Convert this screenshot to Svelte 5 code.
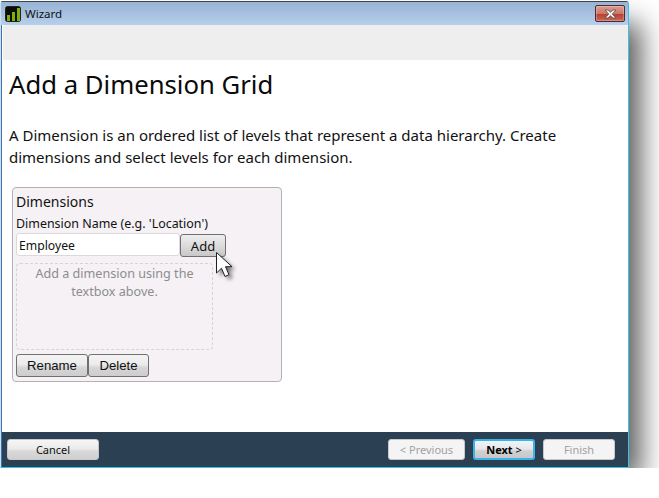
<script>
  const bars = [
    { x: 2, y: 9, h: 6 },
    { x: 7, y: 6, h: 9 },
    { x: 12, y: 2, h: 13 }
  ];
</script>

<div class="window">
  <header class="titlebar">
    <svg class="app-icon" width="16" height="16" viewBox="0 0 16 16">
      <rect x="0.5" y="0.5" width="15" height="15" rx="2" fill="#0c0c04" stroke="#222" />
      {#each bars as b}
        <rect x={b.x} y={b.y} width="3" height={b.h} fill="#7db00a" />
      {/each}
    </svg>
    <span class="title">Wizard</span>
    <div class="close">
      <svg width="13" height="10" viewBox="0 0 13 10">
        <path d="M1 1h3l2.500 2.200L9 1h3L8.300 5 12 9H9L6.500 6.800 4 9H1l3.700-4z" fill="#f2f2f4" stroke="#5a4a50" stroke-width="0.8" />
      </svg>
    </div>
  </header>

  <div class="client">
    <div class="band"></div>
    <main class="content">
      <h1>Add a Dimension Grid</h1>
      <p class="intro">A Dimension is an ordered list of levels that represent a data hierarchy. Create dimensions and select levels for each dimension.</p>

      <section class="group">
        <h2>Dimensions</h2>
        <label for="dim">Dimension Name (e.g. 'Location')</label>
        <div class="entry">
          <input id="dim" value="Employee" />
          <div class="add-wrap">
            <button class="btn add">Add</button>
            <svg class="cursor" width="28" height="36" viewBox="0 0 28 36">
              <defs>
                <filter id="cs" x="-50%" y="-50%" width="200%" height="200%"><feGaussianBlur stdDeviation="2" /></filter>
              </defs>
              <path d="M5 5v20l5-4.500 3.500 8 4-1.800-3.500-7.700H20z" fill="#000" opacity="0.55" filter="url(#cs)" />
              <path d="M1.500 1.500v20.500l5-4.800 3.500 8.300 4-1.800-3.500-8h6.500z" fill="#fff" stroke="#222" stroke-width="1" stroke-linejoin="round" />
            </svg>
          </div>
        </div>
        <div class="list">Add a dimension using the textbox above.</div>
        <div class="actions">
          <button class="btn">Rename</button>
          <button class="btn">Delete</button>
        </div>
      </section>
    </main>
    <footer class="footer">
      <button class="nav cancel">Cancel</button>
      <div class="right">
        <button class="nav off">&lt; Previous</button>
        <button class="nav next"><b>Next</b> &gt;</button>
        <button class="nav off">Finish</button>
      </div>
    </footer>
  </div>
</div>

<style>
  :global(body) {
    margin: 0;
    background: #fff;
  }
  .window {
    width: 629px;
    height: 467px;
    margin-top: 1px;
    box-sizing: border-box;
    display: flex;
    flex-direction: column;
    border: 1px solid #35c4e8;
    border-top: 1px solid #3c4650;
    border-left-color: #cfdff0;
    border-radius: 3px 3px 0 0;
    background: #b4cde8;
    box-shadow: 17px 17px 26px -5px rgba(0, 0, 0, 0.64);
    font-family: "Noto Sans", "Open Sans", sans-serif;
  }
  .titlebar {
    height: 23px;
    flex: none;
    display: flex;
    align-items: center;
    padding: 0 3px 0 4px;
    gap: 4px;
    background: linear-gradient(#98b3d3, #b5cfec);
  }
  .app-icon {
    flex: none;
  }
  .title {
    font-size: 11.500px;
    color: #111;
  }
  .close {
    margin-left: auto;
    width: 30px;
    height: 17px;
    box-sizing: border-box;
    display: flex;
    align-items: center;
    justify-content: center;
    border: 1px solid #4e2a30;
    border-radius: 2px;
    background: linear-gradient(#dd9c8e, #cc7868 50%, #b8402e 55%, #c66a58);
    box-shadow: inset 0 0 0 1px rgba(255, 255, 255, 0.25);
  }
  .client {
    flex: 1;
    min-height: 0;
    border-left: 1px solid #3a74b8;
    display: flex;
    flex-direction: column;
    background: #fff;
  }
  .band {
    height: 35px;
    flex: none;
    margin-left: 1px;
    background: #eeeeee;
    border-radius: 3px 3px 0 0;
  }
  .content {
    flex: 1;
    min-height: 0;
    padding: 0 8px 0 7px;
  }
  h1 {
    margin: 7px 0 0;
    font-size: 25.700px;
    font-weight: 400;
    line-height: 36px;
    color: #0a0a0a;
  }
  .intro {
    margin: 21px 0 0;
    font-size: 15px;
    line-height: 22px;
    color: #111;
  }
  .group {
    width: 270px;
    height: 195px;
    box-sizing: border-box;
    margin: 19px 0 0 3px;
    padding: 4px 3px;
    border: 1px solid #b4b0b4;
    border-radius: 4px;
    background: #f5f1f5;
    display: flex;
    flex-direction: column;
  }
  h2 {
    margin: 0;
    font-size: 14px;
    font-weight: 400;
    line-height: 20px;
    color: #111;
  }
  label {
    margin-top: 4px;
    font-size: 12.450px;
    line-height: 16px;
    color: #111;
  }
  .entry {
    display: flex;
    margin-top: 1px;
  }
  input {
    width: 164px;
    height: 23px;
    box-sizing: border-box;
    padding: 1px 2px 0;
    border: 1px solid #dcd8dc;
    border-radius: 3px;
    background: #fff;
    font: 12.200px "Noto Sans", sans-serif;
    color: #111;
  }
  .add-wrap {
    position: relative;
    padding-top: 1px;
  }
  .btn {
    height: 23px;
    box-sizing: border-box;
    padding: 0;
    border: 1px solid #707070;
    border-radius: 3px;
    background: linear-gradient(#f4f4f4, #ebebeb 45%, #d6d6d6 60%, #cdcdcd);
    font: 13.200px "Liberation Sans", Arial, sans-serif;
    color: #111;
  }
  .add {
    display: block;
    width: 46px;
    background: linear-gradient(#eeeeee, #dcdcdc 50%, #c8c8c8);
    font: 13px "Noto Sans", sans-serif;
  }
  .cursor {
    position: absolute;
    left: 35px;
    top: 18px;
  }
  .list {
    width: 197px;
    height: 88px;
    box-sizing: border-box;
    margin-top: 6px;
    padding: 1px 10px;
    border: 1px dashed #d6d2d6;
    border-radius: 4px;
    font-size: 12.600px;
    line-height: 18px;
    text-align: center;
    color: #8d8d8d;
  }
  .actions {
    display: flex;
    margin-top: 4px;
  }
  .actions .btn:first-child {
    width: 72px;
  }
  .actions .btn:last-child {
    width: 61px;
  }
  .footer {
    height: 35px;
    flex: none;
    display: flex;
    justify-content: space-between;
    align-items: flex-start;
    box-sizing: border-box;
    padding: 7px 13px 0 5px;
    background: #2c4054;
  }
  .right {
    display: flex;
    gap: 8px;
  }
  .nav {
    height: 21px;
    box-sizing: border-box;
    padding: 0;
    border: 1px solid #c8c8c8;
    border-radius: 3px;
    font: 11px "Noto Sans", sans-serif;
    color: #111;
    background: linear-gradient(#f6f6f6, #ebebeb 45%, #d8d8d8 60%, #d0d0d0);
  }
  .cancel {
    width: 92px;
  }
  .off {
    width: 77px;
    background: #f4f4f4;
    color: #a2a2a2;
  }
  .off:last-child {
    width: 72px;
  }
  .next {
    width: 62px;
    border: 2px solid #38b4ea;
    background: linear-gradient(#f0f4f8, #e6e8ea 45%, #d0d0d0 60%, #c8c8c8);
    color: #000;
  }
</style>
